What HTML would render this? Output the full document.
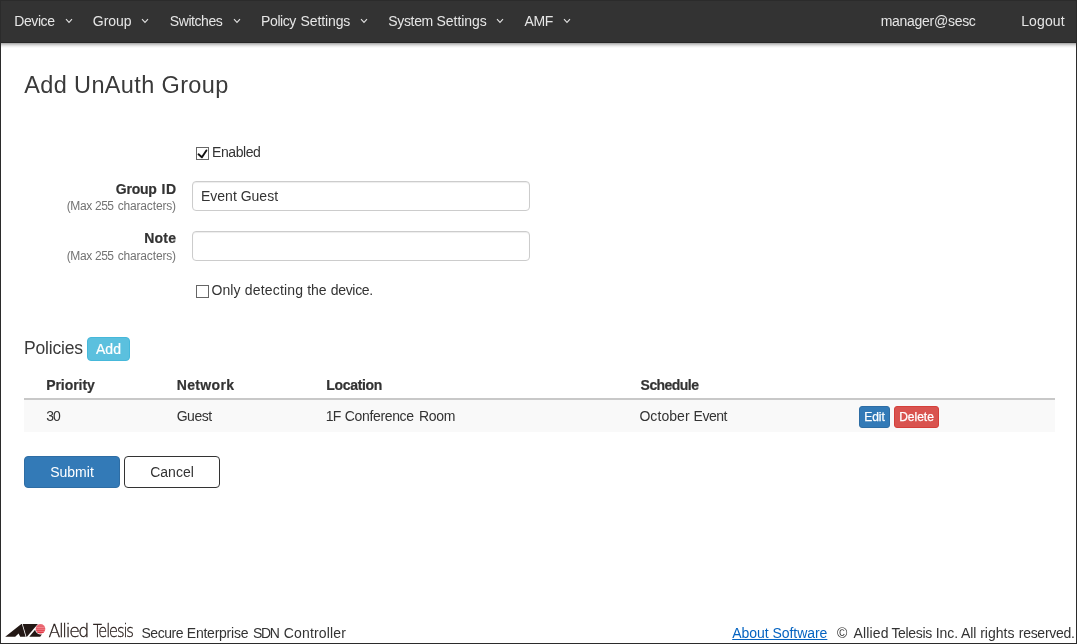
<!DOCTYPE html>
<html><head><meta charset="utf-8"><title>Add UnAuth Group</title>
<style>
html,body{margin:0;padding:0;}
body{width:1077px;height:644px;position:relative;overflow:hidden;background:#fff;font-family:"Liberation Sans","DejaVu Sans",sans-serif;color:#333;font-size:14px;}
.abs{position:absolute;white-space:nowrap;line-height:1;}
#frame{position:absolute;left:0;top:0;width:1075px;height:642px;border-left:1px solid #2b2b2b;border-right:1px solid #2b2b2b;border-bottom:1px solid #2b2b2b;border-top:1px solid #2b2b2b;z-index:10;pointer-events:none;}
#nav{position:absolute;left:0;top:0;width:1077px;height:42px;background:#333;border-bottom:1px solid #272727;}
#shadow{position:absolute;left:0;top:43px;width:1077px;height:5px;background:linear-gradient(to bottom,#b0b0b0 0,#b0b0b0 20%,#cacaca 20%,#cacaca 40%,#e0e0e0 40%,#e0e0e0 60%,#f0f0f0 60%,#f0f0f0 80%,#fafafa 80%,#fafafa 100%);}
.nv{position:absolute;top:13px;color:#e6e6e6;font-size:14px;line-height:16px;white-space:nowrap;}
.chev{position:absolute;top:18px;width:8px;height:6px;}
h1,h2{margin:0;font-weight:normal;}
.btn{position:absolute;box-sizing:border-box;padding:0;margin:0;font-family:inherit;cursor:pointer;display:block;border-radius:4px;text-align:center;color:#fff;white-space:nowrap;}
.inp{position:absolute;box-sizing:border-box;border:1px solid #ccc;border-radius:4px;background:#fff;box-shadow:inset 0 1px 1px rgba(0,0,0,.075);}
.cb{position:absolute;box-sizing:border-box;width:13px;height:13px;border:1px solid #666;background:#fff;}
.w{position:relative;display:inline-block;}
.lbl{position:absolute;right:901px;white-space:nowrap;line-height:1;}
#page{position:absolute;left:0;top:0;width:1077px;height:644px;will-change:transform;}
</style></head><body>
<div id="page">
<div id="nav">
 <span class="nv" id="n1" style="left:14.2px;letter-spacing:-0.4px;">Device</span>
 <span class="nv" id="n2" style="left:92.8px;letter-spacing:-0.03px;">Group</span>
 <span class="nv" id="n3" style="left:169.8px;letter-spacing:-0.43px;">Switches</span>
 <span class="nv" id="n4" style="left:260.6px;"><span class="w" id="n4_0" style="left:0.5px;letter-spacing:-0.42px;">Policy</span> <span class="w" id="n4_1" style="left:1.2px;letter-spacing:-0.11px;">Settings</span></span>
 <span class="nv" id="n5" style="left:388.2px;"><span class="w" id="n5_0" style="left:0.0px;letter-spacing:-0.32px;">System</span> <span class="w" id="n5_1" style="left:-0.3px;letter-spacing:-0.04px;">Settings</span></span>
 <span class="nv" id="n6" style="left:524.6px;letter-spacing:-0.46px;">AMF</span>
 <span class="nv" id="n7" style="left:880.7px;letter-spacing:-0.28px;">manager@sesc</span>
 <span class="nv" id="n8" style="left:1021.2px;letter-spacing:0.12px;">Logout</span>
 <svg class="chev" style="left:65px" viewBox="0 0 8 6"><path d="M1 1.2L4 4.3L7 1.2" fill="none" stroke="#e0e0e0" stroke-width="1.15"/></svg>
 <svg class="chev" style="left:141px" viewBox="0 0 8 6"><path d="M1 1.2L4 4.3L7 1.2" fill="none" stroke="#e0e0e0" stroke-width="1.15"/></svg>
 <svg class="chev" style="left:233px" viewBox="0 0 8 6"><path d="M1 1.2L4 4.3L7 1.2" fill="none" stroke="#e0e0e0" stroke-width="1.15"/></svg>
 <svg class="chev" style="left:360px" viewBox="0 0 8 6"><path d="M1 1.2L4 4.3L7 1.2" fill="none" stroke="#e0e0e0" stroke-width="1.15"/></svg>
 <svg class="chev" style="left:496px" viewBox="0 0 8 6"><path d="M1 1.2L4 4.3L7 1.2" fill="none" stroke="#e0e0e0" stroke-width="1.15"/></svg>
 <svg class="chev" style="left:563px" viewBox="0 0 8 6"><path d="M1 1.2L4 4.3L7 1.2" fill="none" stroke="#e0e0e0" stroke-width="1.15"/></svg>
</div>
<div id="shadow"></div>

<h1 class="abs" id="h1" style="left:24.3px;top:73.6px;font-size:23.5px;color:#3a3a3a;letter-spacing:0.36px;">Add UnAuth Group</h1>

<div class="cb" style="left:196px;top:147px;"><svg width="11" height="11" viewBox="0 0 11 11" style="display:block;overflow:visible"><path d="M1.5 6.3L4.9 9.3L9.4 2.4" fill="none" stroke="#111" stroke-width="1.9" stroke-linecap="round" stroke-linejoin="round"/></svg></div>
<div class="abs" id="t_en" style="left:212.0px;top:145.3px;font-size:14px;letter-spacing:-0.42px;">Enabled</div>

<div class="abs" id="l1" style="left:115.7px;top:182.3px;font-weight:bold;font-size:14px;-webkit-text-stroke:.2px #333;"><span class="w" id="l1_0" style="left:0.1px;letter-spacing:-0.24px;">Group</span> <span class="w" id="l1_1" style="left:1.1px;letter-spacing:0.55px;">ID</span></div>
<div class="abs" id="l1s" style="left:66.6px;top:200px;font-size:12px;color:#737373;"><span class="w" id="l1s_0" style="left:0.1px;letter-spacing:-0.37px;">(Max</span> <span class="w" id="l1s_1" style="left:-0.2px;letter-spacing:-0.48px;">255</span> <span class="w" id="l1s_2" style="left:0.6px;letter-spacing:-0.16px;">characters)</span></div>
<div class="inp" style="left:192px;top:181px;width:338px;height:30px;"></div>
<div class="abs" id="t_eg" style="left:201px;top:189px;font-size:14px;color:#333;letter-spacing:0px;">Event Guest</div>

<div class="lbl" id="l2" style="top:231.3px;font-weight:bold;font-size:14px;-webkit-text-stroke:.2px #333;letter-spacing:0.18px;margin-right:-0.18px;">Note</div>
<div class="abs" id="l2s" style="left:66.6px;top:250px;font-size:12px;color:#737373;"><span class="w" id="l2s_0" style="left:0.1px;letter-spacing:-0.37px;">(Max</span> <span class="w" id="l2s_1" style="left:-0.2px;letter-spacing:-0.48px;">255</span> <span class="w" id="l2s_2" style="left:0.6px;letter-spacing:-0.16px;">characters)</span></div>
<div class="inp" style="left:192px;top:231px;width:338px;height:30px;"></div>

<div class="cb" style="left:196px;top:285px;"></div>
<div class="abs" id="t_od" style="left:212.7px;top:283.3px;font-size:14px;"><span class="w" id="t_od_0" style="left:-1.1px;letter-spacing:0.0px;">Only</span> <span class="w" id="t_od_1" style="left:-0.6px;letter-spacing:0.18px;">detecting</span> <span class="w" id="t_od_2" style="left:-0.4px;letter-spacing:-0.16px;">the</span> <span class="w" id="t_od_3" style="left:0.1px;letter-spacing:-0.31px;">device.</span></div>

<h2 class="abs" id="h2" style="left:24px;top:339.5px;color:#3a3a3a;font-size:17.5px;letter-spacing:-0.17px;">Policies</h2>
<button type="button" class="btn" id="b_add" style="left:87px;top:337px;width:43px;height:24px;background:#5bc0de;border:1px solid #46b8da;font-size:14px;line-height:22px;-webkit-text-stroke:.2px #fff;">Add</button>

<div class="abs" id="th1" style="left:46.2px;top:378.3px;font-weight:bold;font-size:14px;-webkit-text-stroke:.2px #333;letter-spacing:-0.05px;">Priority</div>
<div class="abs" id="th2" style="left:176.7px;top:378.3px;font-weight:bold;font-size:14px;-webkit-text-stroke:.2px #333;letter-spacing:0.36px;">Network</div>
<div class="abs" id="th3" style="left:326.2px;top:378.3px;font-weight:bold;font-size:14px;-webkit-text-stroke:.2px #333;letter-spacing:-0.3px;">Location</div>
<div class="abs" id="th4" style="left:640.6px;top:378.3px;font-weight:bold;font-size:14px;-webkit-text-stroke:.2px #333;letter-spacing:-0.55px;">Schedule</div>
<div style="position:absolute;left:24px;top:398px;width:1031px;height:2px;background:#c8c8c8;"></div>
<div style="position:absolute;left:24px;top:400px;width:1031px;height:32px;background:#f9f9f9;"></div>
<div class="abs" id="td1" style="left:46.2px;top:409.3px;font-size:14px;letter-spacing:-0.9px;">30</div>
<div class="abs" id="td2" style="left:176.7px;top:409.3px;font-size:14px;letter-spacing:-0.47px;">Guest</div>
<div class="abs" id="td3" style="left:326.3px;top:409.3px;font-size:14px;"><span class="w" id="td3_0" style="left:-0.5px;letter-spacing:-0.8px;">1F</span> <span class="w" id="td3_1" style="left:-0.2px;letter-spacing:-0.34px;">Conference</span> <span class="w" id="td3_2" style="left:1.2px;letter-spacing:-0.27px;">Room</span></div>
<div class="abs" id="td4" style="left:640.0px;top:409.3px;font-size:14px;"><span class="w" id="td4_0" style="left:-0.6px;letter-spacing:0.07px;">October</span> <span class="w" id="td4_1" style="left:-0.6px;letter-spacing:-0.48px;">Event</span></div>
<button type="button" class="btn" id="b_edit" style="left:859px;top:406px;width:31px;height:22px;background:#337ab7;border:1px solid #2e6da4;font-size:12px;line-height:21px;-webkit-text-stroke:.25px #fff;border-radius:3px;">Edit</button>
<button type="button" class="btn" id="b_del" style="left:894px;top:406px;width:45px;height:22px;background:#d9534f;border:1px solid #d43f3a;font-size:12px;line-height:21px;-webkit-text-stroke:.25px #fff;border-radius:3px;">Delete</button>

<button type="button" class="btn" id="b_sub" style="left:24px;top:456px;width:96px;height:32px;background:#337ab7;border:1px solid #2e6da4;font-size:14px;line-height:30px;">Submit</button>
<button type="button" class="btn" id="b_can" style="left:124px;top:456px;width:96px;height:32px;background:#fff;border:1px solid #333;color:#333;font-size:14px;line-height:30px;">Cancel</button>

<svg id="logo" style="position:absolute;left:0;top:618px" width="50" height="24" viewBox="0 618 50 24">
 <path d="M5.2 636.8L21.3 624L21.9 624L25.6 636.8L20.2 636.8L18.6 633.6L15.2 636.8Z" fill="#231815"/>
 <path d="M22.7 624L37.9 624L26.9 636.8L26.4 636.8Z" fill="#231815"/>
 <path d="M29.3 636.8L35.1 629.7A5.6 5.6 0 0 0 42 634.3L40.2 636.8Z" fill="#231815"/>
 <defs><linearGradient id="rg" x1="0" y1="0" x2="0" y2="1"><stop offset="0" stop-color="#eb727c"/><stop offset=".45" stop-color="#e85560"/><stop offset="1" stop-color="#e12f3d"/></linearGradient></defs>
 <circle cx="40.5" cy="628.8" r="4.8" fill="url(#rg)"/>
 <path d="M36.2 627.5h8.6M35.9 629.3h9.2M36.6 631.4h7.8" stroke="#f4a0a6" stroke-width=".6" fill="none"/>
</svg>
<div class="abs" id="at" style="left:48.5px;top:623.1px;font-size:17.3px;font-family:'DejaVu Sans Light','DejaVu Sans',sans-serif;font-weight:200;color:#231815;-webkit-text-stroke:0.32px #231815;letter-spacing:-1.4px;">Allied</div>
<div class="abs" id="at2" style="left:93px;top:623.1px;font-size:17.3px;font-family:'DejaVu Sans Light','DejaVu Sans',sans-serif;font-weight:200;color:#231815;-webkit-text-stroke:0.32px #231815;letter-spacing:-1.3px;transform-origin:0 0;transform:scaleX(.84);">Telesis</div>
<div class="abs" id="f1" style="left:141.4px;top:626px;font-size:14px;"><span class="w" id="f1_0" style="left:0.1px;letter-spacing:-0.48px;">Secure</span> <span class="w" id="f1_1" style="left:0.1px;letter-spacing:-0.25px;">Enterprise</span> <span class="w" id="f1_2" style="left:1.0px;letter-spacing:-1.28px;">SDN</span> <span class="w" id="f1_3" style="left:2.2px;letter-spacing:0.15px;">Controller</span></div>
<a href="#" class="abs" id="f2" style="left:732.2px;top:626px;font-size:14px;color:#0563c1;text-decoration:underline;text-underline-offset:0.8px;letter-spacing:-0.04px;">About Software</a>
<div class="abs" id="f3" style="left:837.0px;top:626px;font-size:14px;"><span class="w" id="f3_0" style="left:0.1px;letter-spacing:0px;">©</span> <span class="w" id="f3_1" style="left:2.2px;letter-spacing:0.16px;">Allied</span> <span class="w" id="f3_2" style="left:1.1px;letter-spacing:-0.34px;">Telesis</span> <span class="w" id="f3_3" style="left:1.1px;letter-spacing:-0.04px;">Inc.</span> <span class="w" id="f3_4" style="left:0.1px;letter-spacing:-0.08px;">All</span> <span class="w" id="f3_5" style="left:0.0px;letter-spacing:0.0px;">rights</span> <span class="w" id="f3_6" style="left:0.5px;letter-spacing:-0.28px;">reserved.</span></div>
<div id="frame"></div>
</div>
</body></html>
